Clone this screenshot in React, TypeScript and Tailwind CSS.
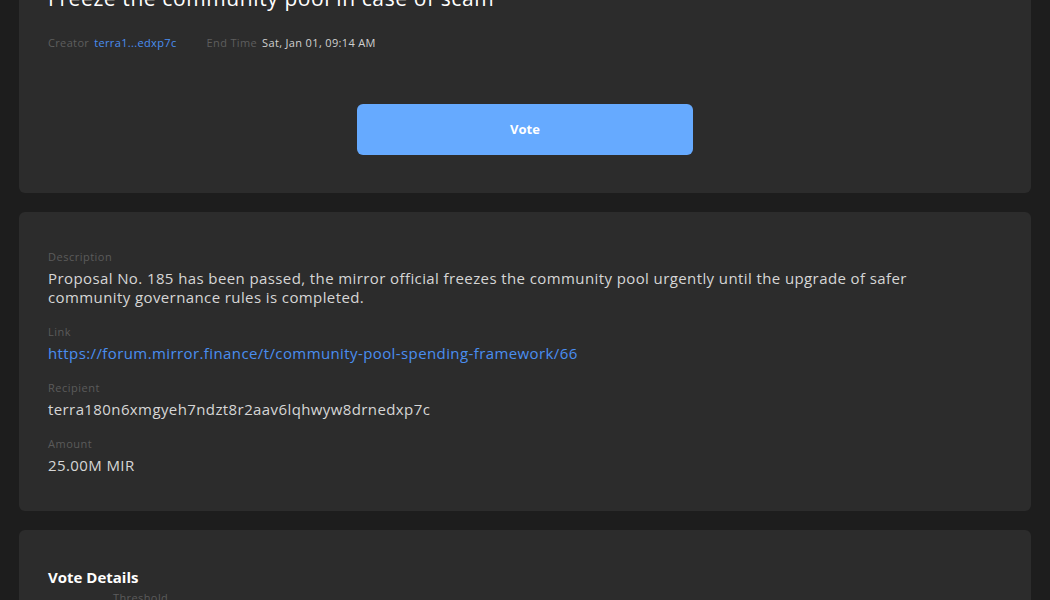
const fontStack = "font-['Open_Sans','Liberation_Sans',sans-serif]";

function Field({ label, children }: { label: string; children: React.ReactNode }) {
  return (
    <div className="mb-[18px]">
      <div className="text-[11px] leading-[14px] tracking-[0.5px] text-[#5b5b5b]">{label}</div>
      <div className="mt-[5px] text-[15px] leading-[19px] tracking-[0.4px] text-[#d6d6d6]">{children}</div>
    </div>
  );
}

export default function App() {
  return (
    <div className={`h-[600px] bg-[#1d1d1d] px-[19px] overflow-hidden ${fontStack}`}>
      {/* Header card (page is scrolled, title partly hidden) */}
      <div className="-mt-[40px] rounded-[6px] bg-[#2c2c2c] px-[29px] pt-[24px] pb-[38px]">
        <h1 className="text-[21px] leading-[28px] font-normal text-white tracking-[0.6px]">
          Freeze the community pool in case of scam
        </h1>
        <div className="mt-[24px] flex items-center text-[11px] leading-[14px] tracking-[0.35px]">
          <span className="text-[#5e5e5e]">Creator</span>
          <span className="ml-[5px] text-[#4a8ef0]">terra1...edxp7c</span>
          <span className="ml-[30px] text-[#5e5e5e]">End Time</span>
          <span className="ml-[5px] text-[#d0d0d0]">Sat, Jan 01, 09:14 AM</span>
        </div>
        <div className="mt-[54px] flex justify-center">
          <button className="h-[51px] w-[336px] rounded-[6px] bg-[#66aaff] text-[13px] font-bold text-white">
            Vote
          </button>
        </div>
      </div>

      {/* Detail card */}
      <div className="mt-[19px] rounded-[6px] bg-[#2c2c2c] px-[29px] pt-[38px] pb-[18px]">
        <Field label="Description">
          <span className="block max-w-[900px]">
            Proposal No. 185 has been passed, the mirror official freezes the community pool urgently until the upgrade of safer community governance rules is completed.
          </span>
        </Field>
        <Field label="Link">
          <a className="text-[#4a8ef0]" href="#">
            https://forum.mirror.finance/t/community-pool-spending-framework/66
          </a>
        </Field>
        <Field label="Recipient">terra180n6xmgyeh7ndzt8r2aav6lqhwyw8drnedxp7c</Field>
        <Field label="Amount">25.00M MIR</Field>
      </div>

      {/* Vote details card */}
      <div className="mt-[19px] rounded-[6px] bg-[#2c2c2c] px-[29px] pt-[38px] pb-[40px]">
        <h2 className="text-[15px] leading-[18px] font-bold text-white">Vote Details</h2>
        <div className="mt-[4px] pl-[65px] text-[11px] tracking-[0.4px] text-[#5b5b5b]">Threshold</div>
      </div>
    </div>
  );
}
